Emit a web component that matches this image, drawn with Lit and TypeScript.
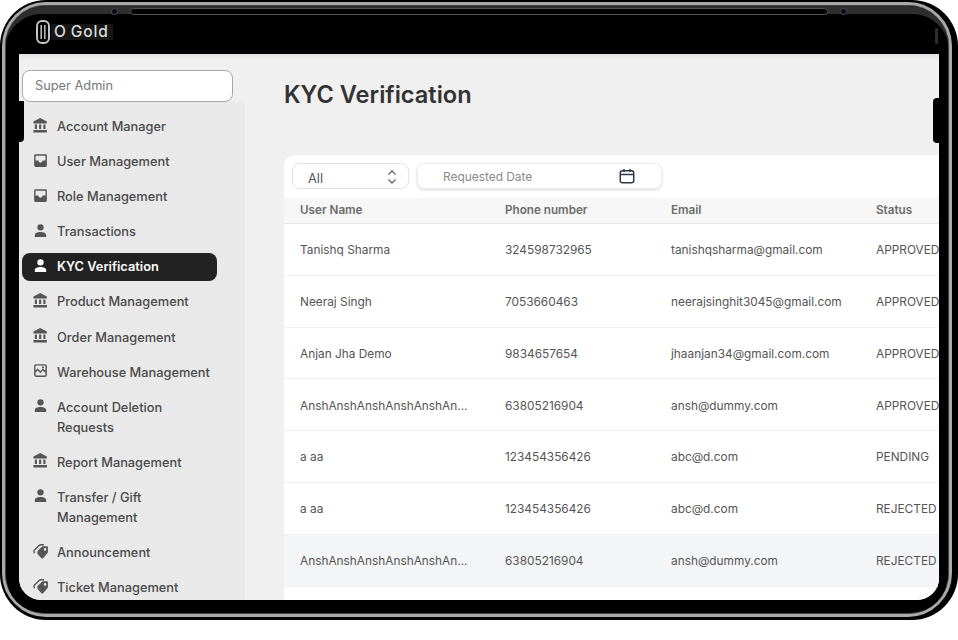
import { LitElement, html, css, svg } from "lit";
import { customElement } from "lit/decorators.js";

const icons: Record<string, any> = {
  bank: svg`<path d="M11.5,1.5L2,6.5V9H21V6.5M16,10.5V17H19V10.5M2,22H21V18.5H2M10,10.5V17H13V10.5M4,10.5V17H7V10.5H4Z"/>`,
  inbox: svg`<path fill-rule="evenodd" d="M19 3H5a2 2 0 0 0-2 2v14a2 2 0 0 0 2 2h14a2 2 0 0 0 2-2V5a2 2 0 0 0-2-2zm0 9h-4a3 3 0 0 1-6 0H5V5.2h14V12z"/>`,
  person: svg`<path d="M12,3A4.5,4.5 0 0,1 16.5,7.5A4.5,4.5 0 0,1 12,12A4.5,4.5 0 0,1 7.5,7.5A4.5,4.5 0 0,1 12,3M12,14C16.42,14 20,15.79 20,18V21H4V18C4,15.79 7.58,14 12,14Z"/>`,
  image: svg`<path fill-rule="evenodd" d="M18.5 3h-13A2.5 2.5 0 0 0 3 5.500v13A2.500 2.500 0 0 0 5.500 21h13a2.500 2.500 0 0 0 2.500-2.500v-13A2.500 2.500 0 0 0 18.500 3zm.5 15.500a.5.5 0 0 1-.5.5h-13a.5.5 0 0 1-.5-.5V15l3-3 4 4 3-4 4 3v3.500zm0-6.500l-4-3-3 4-4-4-3 3V5.500a.5.5 0 0 1 .5-.5h13a.5.5 0 0 1 .5.5V12z"/><circle cx="15.500" cy="7.500" r="1.500"/>`,
  tag: svg`<path fill-rule="evenodd" d="M8.500 10.500 14.500 5Q15.500 4.500 16.500 4.500H21Q22.500 4.500 22.500 6V12.500Q22.500 13.500 22 14L16 21Q14.500 22.500 13 21L8 15.500Q6.500 12.500 8.500 10.500ZM18.500 7.200a1.800 1.800 0 1 0 0 3.600 1.800 1.800 0 0 0 0-3.600Z"/><path d="M3.500 14.500 2.800 12.500Q2.500 11 3.500 10L10 3.500Q11 2.500 12.500 2.500H17" fill="none" stroke="#555" stroke-width="2"/>`,
};

const nav: [string, string, boolean?][] = [
  ["bank", "Account Manager"],
  ["inbox", "User Management"],
  ["inbox", "Role Management"],
  ["person", "Transactions"],
  ["person", "KYC Verification", true],
  ["bank", "Product Management"],
  ["bank", "Order Management"],
  ["image", "Warehouse Management"],
  ["person", "Account Deletion Requests"],
  ["bank", "Report Management"],
  ["person", "Transfer / Gift Management"],
  ["tag", "Announcement"],
  ["tag", "Ticket Management"],
];

const LONG = "AnshAnshAnshAnshAnshAn...";
const rows: [string, string, string, string][] = [
  ["Tanishq Sharma", "324598732965", "tanishqsharma@gmail.com", "APPROVED"],
  ["Neeraj Singh", "7053660463", "neerajsinghit3045@gmail.com", "APPROVED"],
  ["Anjan Jha Demo", "9834657654", "jhaanjan34@gmail.com.com", "APPROVED"],
  [LONG, "63805216904", "ansh@dummy.com", "APPROVED"],
  ["a aa", "123454356426", "abc@d.com", "PENDING"],
  ["a aa", "123454356426", "abc@d.com", "REJECTED"],
  [LONG, "63805216904", "ansh@dummy.com", "REJECTED"],
];

@customElement("app-root")
export class AppRoot extends LitElement {
  static styles = css`
    :host {
      display: block;
      width: 958px;
      height: 640px;
      background: #fff;
      font-family: Inter, "Liberation Sans", sans-serif;
      overflow: hidden;
    }
    .phone {
      position: relative;
      box-sizing: border-box;
      width: 958px;
      height: 620px;
      background: #000;
      border-radius: 46px;
      padding: 54px 19px 20px;
      overflow: hidden;
    }
    .rim {
      position: absolute;
      left: 2px;
      top: 2px;
      right: 6px;
      bottom: 3px;
      border-radius: 44px;
      border: 3px solid #a9a9a9;
      box-shadow: inset 0 0 0 1px #444;
    }
    .rim-fill {
      position: absolute;
      left: 6px;
      top: 6px;
      right: 10px;
      bottom: 7px;
      border-radius: 40px;
      background: #000;
      border-top: 8px solid #2e2e2e;
    }
    .rim-inner {
      position: absolute;
      left: 7px;
      right: 11px;
      top: 14px;
      bottom: 8px;
      border-radius: 34px;
      background: #000;
    }
    .slit {
      position: absolute;
      left: 130px;
      width: 698px;
      top: 8px;
      height: 7px;
      box-sizing: border-box;
      background: #000;
      border: 1px solid #555;
      border-radius: 4px;
    }
    .cam {
      position: absolute;
      top: 9px;
      width: 5px;
      height: 5px;
      border-radius: 50%;
      background: #0a0a22;
      box-shadow: 0 0 0 1px #444;
    }
    .cam.l { left: 112px; }
    .cam.r { left: 841px; }
    .sensor {
      position: absolute;
      left: 935px;
      top: 28px;
      width: 3px;
      height: 16px;
      border-radius: 2px;
      background: #2e2e2e;
    }
    .bump-r {
      position: absolute;
      right: 19px;
      top: 98px;
      width: 6px;
      height: 45px;
      background: #000;
      border-radius: 4px 0 0 4px;
    }
    .bump-l {
      position: absolute;
      left: 19px;
      top: 101px;
      width: 5px;
      height: 41px;
      background: #000;
      border-radius: 0 0 4px 0;
    }
    .logo {
      position: absolute;
      left: 36px;
      top: 20px;
      display: flex;
      align-items: center;
      gap: 1px;
      height: 24px;
    }
    .logo svg { width: 14px; height: 24px; display: block; }
    .logo-text {
      background: #161616;
      color: #dcdcdc;
      font-size: 15.500px;
      font-weight: 500;
      line-height: 16px;
      padding: 0 4px 0 3px;
      display: flex;
      gap: 4px;
      letter-spacing: 0.900px;
    }
    .screen {
      position: relative;
      display: flex;
      height: 546px;
      background: linear-gradient(#dfe3e6, #f0f0f0 6px);
      border-radius: 0 0 22px 22px;
      overflow: hidden;
    }
    .side {
      flex: none;
      width: 226px;
      display: flex;
      flex-direction: column;
    }
    .role {
      box-sizing: border-box;
      flex: none;
      height: 32px;
      margin: 15.500px 0 0 3px;
      width: 211px;
      background: #fff;
      border: 1px solid #a8a8a8;
      border-radius: 8px;
      font-size: 12.800px;
      color: #777;
      display: flex;
      align-items: center;
      padding-left: 12px;
      position: relative;
      z-index: 1;
    }
    .menu {
      flex: 1;
      background: #e9e9e9;
      padding: 11.500px 28px 0 3px;
      display: flex;
      flex-direction: column;
      gap: 7.100px;
    }
    .item {
      display: flex;
      align-items: flex-start;
      gap: 8.500px;
      padding: 4px 0 4px 9.500px;
      font-size: 12.800px;
      font-weight: 500;
      line-height: 20px;
      color: #4a4a4a;
      border-radius: 8px;
    }
    .item svg {
      flex: none;
      width: 17px;
      height: 17px;
      margin-top: -0.500px;
      fill: #555;
    }
    .item.on {
      background: #222;
      color: #fff;
      font-weight: 600;
    }
    .item.on svg { fill: #fff; }
    .main {
      flex: 1;
      min-width: 0;
      padding-left: 39px;
      display: flex;
      flex-direction: column;
    }
    h1 {
      margin: 25px 0 0;
      font-size: 23.600px;
      line-height: 32px;
      font-weight: 600;
      color: #333;
      flex: none;
    }
    .card {
      margin-top: 44px;
      flex: 1;
      background: #fff;
      border-radius: 12px 0 0 0;
      overflow: hidden;
    }
    .filters {
      display: flex;
      gap: 8px;
      padding: 8px 8px 9px;
    }
    .select {
      box-sizing: border-box;
      width: 117px;
      height: 26px;
      border: 1px solid #e4e4e4;
      border-radius: 8px;
      display: flex;
      align-items: center;
      justify-content: space-between;
      padding: 4px 10px 0 15px;
      font-size: 12.800px;
      color: #555;
    }
    .select svg { width: 12px; height: 18px; fill: none; stroke: #666; stroke-width: 1.300; margin-top: -3px; }
    .date {
      box-sizing: border-box;
      width: 245px;
      height: 26px;
      border: 1px solid #ececec;
      border-radius: 8px;
      box-shadow: 0 1px 3px rgba(0, 0, 0, 0.160);
      display: flex;
      align-items: center;
      justify-content: space-between;
      padding: 0 25px;
      font-size: 11.900px;
      color: #8a8a8a;
    }
    .date svg { width: 18px; height: 18px; fill: none; stroke: #2c3a47; stroke-width: 2; }
    table {
      border-collapse: separate;
      border-spacing: 0;
      table-layout: fixed;
      width: 700px;
    }
    th {
      height: 26px;
      padding: 0 0 0.500px 16px;
      box-sizing: border-box;
      background: #f7f7f7;
      border-bottom: 1px solid #e6e6e6;
      text-align: left;
      font-size: 11.700px;
      font-weight: 600;
      color: #6b6b6b;
      white-space: nowrap;
    }
    td {
      height: 51.830px;
      padding: 1.400px 0 0 16px;
      box-sizing: border-box;
      border-bottom: 1px solid #f1f1f1;
      font-size: 11.850px;
      color: #555;
      white-space: nowrap;
      overflow: hidden;
    }
    tr.hl td { background: #f4f5f7; }
  `;

  render() {
    return html`
      <div class="phone">
        <div class="rim"></div>
        <div class="rim-fill"></div>
        <div class="rim-inner"></div>
        <div class="slit"></div>
        <div class="cam l"></div>
        <div class="cam r"></div>
        <div class="sensor"></div>
        <div class="logo">
          <svg viewBox="0 0 14 24" fill="none" stroke="#c4c4c4">
            <rect x="1" y="1" width="12" height="22" rx="5" stroke-width="2" />
            <path d="M5.200 5v14M8.800 5v14" stroke-width="1.500" />
          </svg>
          <div class="logo-text"><span>O</span><span>Gold</span></div>
        </div>
        <div class="screen">
          <aside class="side">
            <div class="role">Super Admin</div>
            <nav class="menu">
              ${nav.map(
                ([ic, label, on]) => html`<div class="item ${on ? "on" : ""}">
                  <svg viewBox="0 0 24 24">${icons[ic]}</svg><span>${label}</span>
                </div>`
              )}
            </nav>
          </aside>
          <main class="main">
            <h1>KYC Verification</h1>
            <section class="card">
              <div class="filters">
                <div class="select">
                  <span>All</span>
                  <svg viewBox="0 0 12 18"><path d="M2.500 6.500 6 3l3.500 3.500M2.500 11.500 6 15l3.500-3.500" /></svg>
                </div>
                <div class="date">
                  <span>Requested Date</span>
                  <svg viewBox="0 0 24 24">
                    <rect x="3" y="5" width="18" height="16" rx="3" />
                    <path d="M3 10h18M8 2.500v4M16 2.500v4" />
                  </svg>
                </div>
              </div>
              <table>
                <colgroup>
                  <col style="width:205px" /><col style="width:166px" /><col style="width:205px" /><col />
                </colgroup>
                <thead>
                  <tr><th>User Name</th><th>Phone number</th><th>Email</th><th>Status</th></tr>
                </thead>
                <tbody>
                  ${rows.map(
                    (r, i) => html`<tr class="${i === 6 ? "hl" : ""}">
                      <td>${r[0]}</td>
                      <td>${r[1]}</td>
                      <td>${r[2]}</td>
                      <td>${r[3]}</td>
                    </tr>`
                  )}
                  <tr><td></td><td></td><td></td><td></td></tr>
                </tbody>
              </table>
            </section>
          </main>
        </div>
        <div class="bump-l"></div>
        <div class="bump-r"></div>
      </div>
    `;
  }
}
